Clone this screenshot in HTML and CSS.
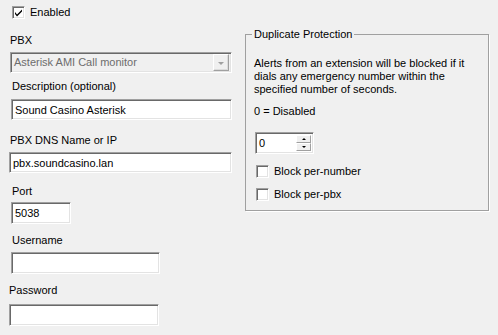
FILE: index.html
```html
<!DOCTYPE html>
<html lang="en">
<head>
	<meta charset="UTF-8">
	<meta name="viewport" content="width=device-width, initial-scale=1.0">
	<title>PBX Settings</title>
	<link rel="stylesheet" href="styles.css">
</head>
<body>
	<div class="form">
		<div class="left-col">
			<label class="check-row enabled">
				<span class="check-box">
					<svg width="9" height="9" viewBox="0 0 9 9"><path d="M1 4 L3 6.5 L8 1.5 L8 3.5 L3 8.5 L1 6 Z" fill="#000"/></svg>
				</span>
				Enabled
			</label>

			<div class="field-label lbl-pbx">PBX</div>
			<div class="combo">
				<span class="combo-text">Asterisk AMI Call monitor</span>
				<span class="combo-button"><span class="arrow-down grey"></span></span>
			</div>

			<div class="field-label lbl-desc">Description (optional)</div>
			<input class="text-box box-desc" type="text" value="Sound Casino Asterisk">

			<div class="field-label lbl-dns">PBX DNS Name or IP</div>
			<input class="text-box box-dns" type="text" value="pbx.soundcasino.lan">

			<div class="field-label lbl-port">Port</div>
			<input class="text-box box-port" type="text" value="5038">

			<div class="field-label lbl-user">Username</div>
			<input class="text-box box-user" type="text" value="">

			<div class="field-label lbl-pass">Password</div>
			<input class="text-box box-pass" type="password" value="">
		</div>

		<fieldset class="group">
			<legend>Duplicate Protection</legend>
			<p class="note">Alerts from an extension will be blocked if it<br>dials any emergency number within the<br>specified number of seconds.</p>
			<p class="note zero">0 = Disabled</p>
			<div class="spinner">
				<span class="spin-value">0</span>
				<span class="spin-buttons">
					<span class="spin-btn"><span class="arrow-up"></span></span>
					<span class="spin-btn"><span class="arrow-down"></span></span>
				</span>
			</div>
			<label class="check-row per-number"><span class="check-box"></span>Block per-number</label>
			<label class="check-row per-pbx"><span class="check-box"></span>Block per-pbx</label>
		</fieldset>
	</div>
</body>
</html>
```

FILE: styles.css
```css
body {
	margin: 0;
	background-color: #f0f0f0;
	font-family: 'Liberation Sans', Arial, sans-serif;
	font-size: 11px;
	line-height: 13px;
	color: #000;
}
.form {
	display: flex;
	align-items: flex-start;
}
.left-col {
	width: 245px;
	display: flex;
	flex-direction: column;
	align-items: flex-start;
	padding-top: 6px;
}

/* checkboxes */
.check-row {
	display: flex;
	align-items: center;
	height: 13px;
}
.check-box {
	box-sizing: border-box;
	width: 13px;
	height: 13px;
	background: #fff;
	border: 1px solid;
	border-color: #a0a0a0 #fff #fff #a0a0a0;
	box-shadow: inset 1px 1px 0 #696969, inset -1px -1px 0 #e3e3e3;
	display: flex;
	align-items: center;
	justify-content: center;
	margin-right: 5px;
}
.check-box svg {
	display: block;
}
.enabled {
	margin-left: 12px;
}

/* labels */
.field-label {
	height: 13px;
}
.lbl-pbx { margin: 15px 0 0 10px; }
.lbl-desc { margin: 7px 0 0 12px; }
.lbl-dns { margin: 14px 0 0 10px; }
.lbl-port { margin: 12px 0 0 12px; }
.lbl-user { margin: 10px 0 0 12px; }
.lbl-pass { margin: 10px 0 0 9px; }

/* sunken boxes */
.text-box, .combo, .spinner {
	box-sizing: border-box;
	height: 21px;
	border: 1px solid;
	border-color: #a0a0a0 #fff #fff #a0a0a0;
	box-shadow: inset 1px 1px 0 #696969, inset -1px -1px 0 #e3e3e3;
	background: #fff;
}
.text-box {
	font: inherit;
	color: #000;
	padding: 0 3px;
	outline: none;
}
.box-desc { margin: 6px 0 0 11px; width: 221px; }
.box-dns { margin: 5px 0 0 9px; width: 223px; }
.box-port { margin: 4px 0 0 11px; width: 60px; height: 22px; }
.box-user { margin: 5px 0 0 11px; width: 149px; height: 22px; }
.box-pass { margin: 7px 0 0 9px; width: 150px; height: 22px; }

/* combo */
.combo {
	margin: 5px 0 0 10px;
	width: 222px;
	background: #f0f0f0;
	display: flex;
	align-items: center;
	padding: 2px;
}
.combo-text {
	flex: 1;
	color: #6d6d6d;
	padding-left: 1px;
}
.combo-button {
	box-sizing: border-box;
	width: 16px;
	height: 17px;
	background: #f0f0f0;
	border: 1px solid;
	border-color: #fff #a0a0a0 #a0a0a0 #fff;
	box-shadow: inset -1px -1px 0 #dcdcdc;
	display: flex;
	align-items: center;
	justify-content: center;
}

/* arrows */
.arrow-down, .arrow-up {
	width: 0;
	height: 0;
	border-left: 3px solid transparent;
	border-right: 3px solid transparent;
}
.arrow-down { border-top: 3px solid #000; }
.arrow-up { border-bottom: 3px solid #000; }
.arrow-down.grey {
	border-top: 3px solid #a0a0a0;
	margin-top: 1px;
}

/* group box */
.group {
	box-sizing: border-box;
	width: 244px;
	height: 183px;
	margin: 28px 0 0 0;
	padding: 0 8px;
	border: 1px solid #a0a0a0;
	box-shadow: 1px 1px 0 #fff;
	min-width: 0;
}
.group legend {
	padding: 0 2px;
	margin-left: -2px;
	line-height: 13px;
}
.note {
	margin: 16px 0 0 0;
}
.note.zero {
	margin-top: 9px;
}

/* spinner */
.spinner {
	margin: 14px 0 0 1px;
	width: 59px;
	height: 22px;
	display: flex;
	align-items: stretch;
	padding: 2px;
}
.spin-value {
	flex: 1;
	padding-left: 1px;
	line-height: 17px;
}
.spin-buttons {
	width: 15px;
	display: flex;
	flex-direction: column;
}
.spin-btn {
	flex: 1;
	box-sizing: border-box;
	background: #f0f0f0;
	border: 1px solid;
	border-color: #fff #a0a0a0 #a0a0a0 #fff;
	display: flex;
	align-items: center;
	justify-content: center;
}
.spin-btn .arrow-up, .spin-btn .arrow-down {
	border-left-width: 2px;
	border-right-width: 2px;
	border-top-width: 2px;
	border-bottom-width: 2px;
}

.per-number {
	margin: 11px 0 0 2px;
}
.per-pbx {
	margin: 10px 0 0 2px;
}
```
